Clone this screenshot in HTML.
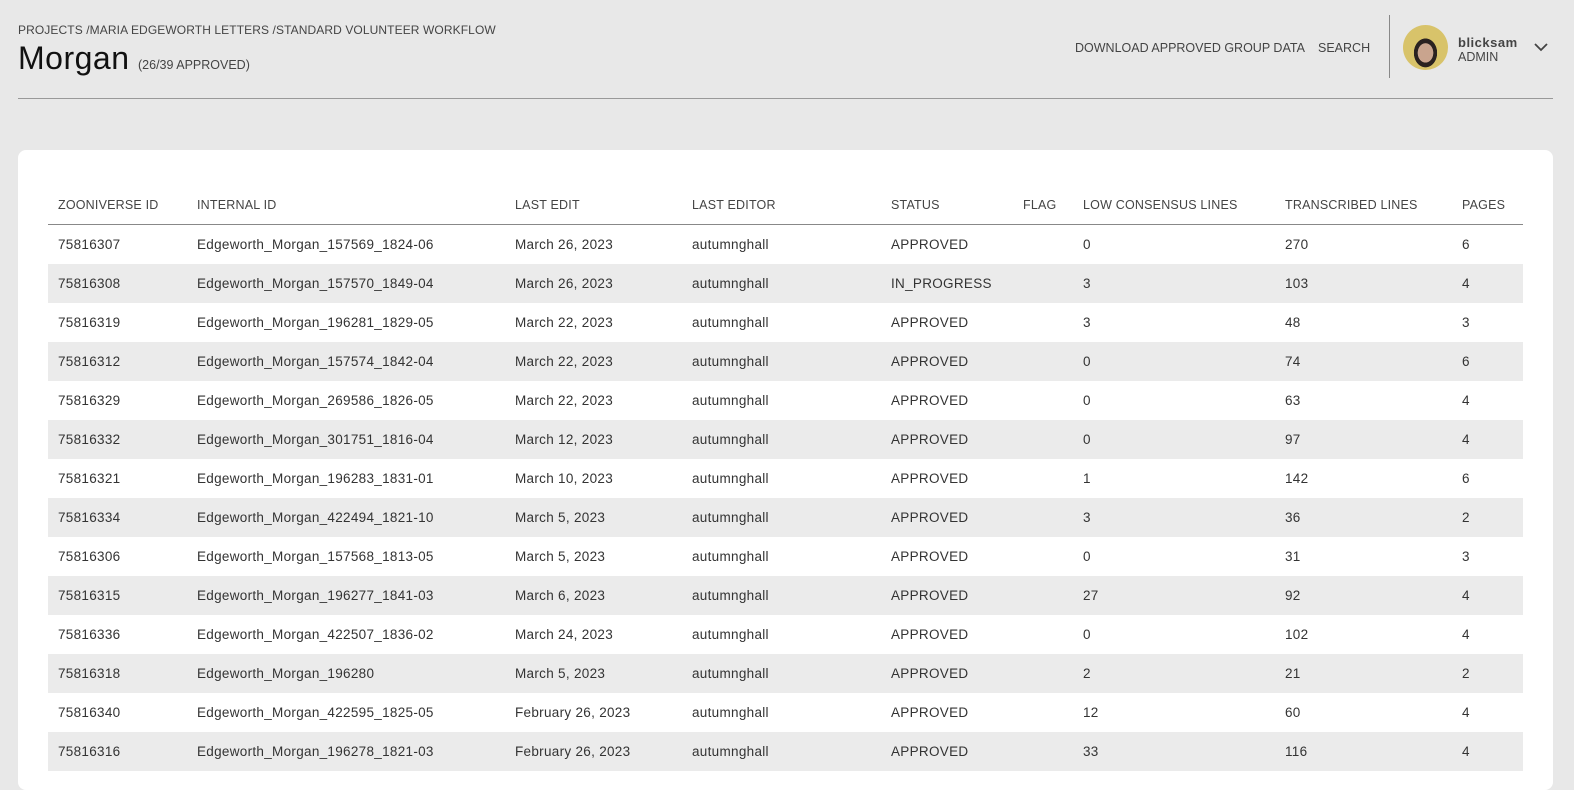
<!DOCTYPE html>
<html><head><meta charset="utf-8"><style>
body{margin:0;background:#e8e8e8;font-family:"Liberation Sans",sans-serif;color:#333;width:1574px;height:773px;overflow:hidden;position:relative}
.bc{position:absolute;left:18px;top:23px;font-size:12px;color:#444;letter-spacing:.1px}
.title{position:absolute;left:18px;top:40px;font-size:32px;color:#111;letter-spacing:.5px}
.cnt{position:absolute;left:138px;top:58px;font-size:12.5px;color:#444}
.hr{position:absolute;left:18px;width:1535px;top:98px;height:1px;background:#999}
.nav{position:absolute;top:41px;font-size:12.5px;color:#444}
.vl{position:absolute;left:1389px;top:15px;width:1px;height:63px;background:#888}
.av{position:absolute;left:1403px;top:25px;width:45px;height:45px;border-radius:50%;background:radial-gradient(ellipse at 50% 62%,#c9a48e 0 24%,#2a2220 25% 36%,#d8c36a 37%)}
.user{position:absolute;left:1458px;top:35px;font-size:13px;font-weight:bold;color:#444;letter-spacing:.5px}
.role{position:absolute;left:1458px;top:50px;font-size:12.5px;color:#444}
.card{position:absolute;left:18px;top:150px;width:1535px;height:640px;background:#fff;border-radius:8px}
table{position:absolute;left:30px;top:35px;width:1475px;border-collapse:collapse;font-size:13.5px;table-layout:fixed}
th{font-weight:normal;text-align:left;color:#444;height:39px;padding:0 0 0 10px;border-bottom:1px solid #888;font-size:12.5px;letter-spacing:.2px}
td{height:39px;padding:0 0 0 10px;color:#333;letter-spacing:.3px;white-space:nowrap}
tbody tr:nth-child(even){background:#ebebeb}
</style></head><body>
<div class="bc">PROJECTS /MARIA EDGEWORTH LETTERS /STANDARD VOLUNTEER WORKFLOW</div>
<div class="title">Morgan</div>
<div class="cnt">(26/39 APPROVED)</div>
<div class="nav" style="left:1075px">DOWNLOAD APPROVED GROUP DATA</div>
<div class="nav" style="left:1318px">SEARCH</div>
<div class="vl"></div>
<div class="av"></div>
<div class="user">blicksam</div>
<div class="role">ADMIN</div>
<svg style="position:absolute;left:1534px;top:42px" width="14" height="10"><path d="M1 2l6 6 6-6" fill="none" stroke="#444" stroke-width="1.8"/></svg>
<div class="hr"></div>
<div class="card"><table>
<colgroup><col style="width:139px"><col style="width:318px"><col style="width:177px"><col style="width:199px"><col style="width:132px"><col style="width:60px"><col style="width:202px"><col style="width:177px"><col></colgroup>
<thead><tr><th>ZOONIVERSE ID</th><th>INTERNAL ID</th><th>LAST EDIT</th><th>LAST EDITOR</th><th>STATUS</th><th>FLAG</th><th>LOW CONSENSUS LINES</th><th>TRANSCRIBED LINES</th><th>PAGES</th></tr></thead>
<tbody>
<tr><td>75816307</td><td>Edgeworth_Morgan_157569_1824-06</td><td>March 26, 2023</td><td>autumnghall</td><td>APPROVED</td><td></td><td>0</td><td>270</td><td>6</td></tr>
<tr><td>75816308</td><td>Edgeworth_Morgan_157570_1849-04</td><td>March 26, 2023</td><td>autumnghall</td><td>IN_PROGRESS</td><td></td><td>3</td><td>103</td><td>4</td></tr>
<tr><td>75816319</td><td>Edgeworth_Morgan_196281_1829-05</td><td>March 22, 2023</td><td>autumnghall</td><td>APPROVED</td><td></td><td>3</td><td>48</td><td>3</td></tr>
<tr><td>75816312</td><td>Edgeworth_Morgan_157574_1842-04</td><td>March 22, 2023</td><td>autumnghall</td><td>APPROVED</td><td></td><td>0</td><td>74</td><td>6</td></tr>
<tr><td>75816329</td><td>Edgeworth_Morgan_269586_1826-05</td><td>March 22, 2023</td><td>autumnghall</td><td>APPROVED</td><td></td><td>0</td><td>63</td><td>4</td></tr>
<tr><td>75816332</td><td>Edgeworth_Morgan_301751_1816-04</td><td>March 12, 2023</td><td>autumnghall</td><td>APPROVED</td><td></td><td>0</td><td>97</td><td>4</td></tr>
<tr><td>75816321</td><td>Edgeworth_Morgan_196283_1831-01</td><td>March 10, 2023</td><td>autumnghall</td><td>APPROVED</td><td></td><td>1</td><td>142</td><td>6</td></tr>
<tr><td>75816334</td><td>Edgeworth_Morgan_422494_1821-10</td><td>March 5, 2023</td><td>autumnghall</td><td>APPROVED</td><td></td><td>3</td><td>36</td><td>2</td></tr>
<tr><td>75816306</td><td>Edgeworth_Morgan_157568_1813-05</td><td>March 5, 2023</td><td>autumnghall</td><td>APPROVED</td><td></td><td>0</td><td>31</td><td>3</td></tr>
<tr><td>75816315</td><td>Edgeworth_Morgan_196277_1841-03</td><td>March 6, 2023</td><td>autumnghall</td><td>APPROVED</td><td></td><td>27</td><td>92</td><td>4</td></tr>
<tr><td>75816336</td><td>Edgeworth_Morgan_422507_1836-02</td><td>March 24, 2023</td><td>autumnghall</td><td>APPROVED</td><td></td><td>0</td><td>102</td><td>4</td></tr>
<tr><td>75816318</td><td>Edgeworth_Morgan_196280</td><td>March 5, 2023</td><td>autumnghall</td><td>APPROVED</td><td></td><td>2</td><td>21</td><td>2</td></tr>
<tr><td>75816340</td><td>Edgeworth_Morgan_422595_1825-05</td><td>February 26, 2023</td><td>autumnghall</td><td>APPROVED</td><td></td><td>12</td><td>60</td><td>4</td></tr>
<tr><td>75816316</td><td>Edgeworth_Morgan_196278_1821-03</td><td>February 26, 2023</td><td>autumnghall</td><td>APPROVED</td><td></td><td>33</td><td>116</td><td>4</td></tr>
</tbody></table></div>
</body></html>
